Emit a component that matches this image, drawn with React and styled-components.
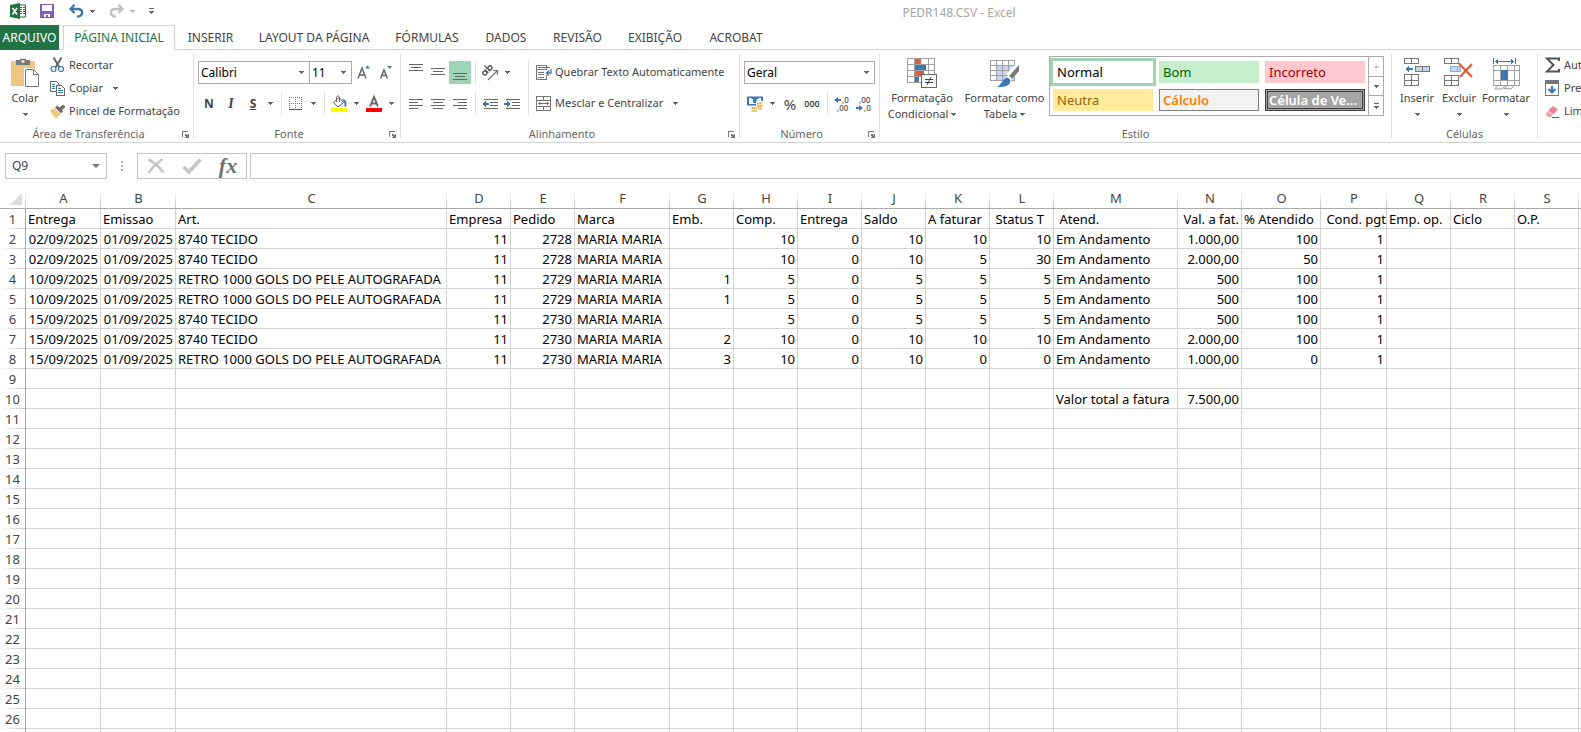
import React, { useState } from 'react';
import styled, { createGlobalStyle } from 'styled-components';

const COLUMNS = [
  ['A', 75], ['B', 75], ['C', 271], ['D', 64], ['E', 64], ['F', 95], ['G', 64], ['H', 64],
  ['I', 64], ['J', 64], ['K', 64], ['L', 64], ['M', 124], ['N', 64], ['O', 79], ['P', 66],
  ['Q', 64], ['R', 64], ['S', 64], ['T', 64], ['U', 64], ['V', 64], ['W', 64],
];

const ROW_COUNT = 50;

const TITLES = [
  'Entrega', 'Emissao', 'Art.', 'Empresa', 'Pedido', 'Marca', 'Emb.', 'Comp.', 'Entrega', 'Saldo',
  'A faturar', ' Status T', ' Atend.', ' Val. a fat.', '% Atendido', ' Cond. pgto', 'Emp. op.', 'Ciclo', 'O.P.',
];

const TECIDO = '8740 TECIDO';
const RETRO = 'RETRO 1000 GOLS DO PELE AUTOGRAFADA';

const order = (entrega, art, pedido, emb, comp, saldo, faturar, status, valor, atendido) => [
  entrega, '01/09/2025', art, '11', pedido, 'MARIA MARIA', emb, comp, '0', saldo,
  faturar, status, 'Em Andamento', valor, atendido, '1',
];

const ROWS = {
  1: TITLES,
  2: order('02/09/2025', TECIDO, '2728', '', '10', '10', '10', '10', '1.000,00', '100'),
  3: order('02/09/2025', TECIDO, '2728', '', '10', '10', '5', '30', '2.000,00', '50'),
  4: order('10/09/2025', RETRO, '2729', '1', '5', '5', '5', '5', '500', '100'),
  5: order('10/09/2025', RETRO, '2729', '1', '5', '5', '5', '5', '500', '100'),
  6: order('15/09/2025', TECIDO, '2730', '', '5', '5', '5', '5', '500', '100'),
  7: order('15/09/2025', TECIDO, '2730', '2', '10', '10', '10', '10', '2.000,00', '100'),
  8: order('15/09/2025', RETRO, '2730', '3', '10', '10', '0', '0', '1.000,00', '0'),
  10: [...Array(12).fill(''), 'Valor total a fatura', '7.500,00'],
};

const isNumeric = (value) => /^[\d./,]+$/.test(value);

const TABS = [
  ['PÁGINA INICIAL', 112],
  ['INSERIR', 71],
  ['LAYOUT DA PÁGINA', 136],
  ['FÓRMULAS', 90],
  ['DADOS', 68],
  ['REVISÃO', 75],
  ['EXIBIÇÃO', 80],
  ['ACROBAT', 82],
];

const STYLES = [
  { name: 'Normal', bg: '#ffffff', color: '#000000', pad: 4 },
  { name: 'Bom', bg: '#c6efce', color: '#006100', pad: 4 },
  { name: 'Incorreto', bg: '#ffc7ce', color: '#9c0006', pad: 4 },
  { name: 'Neutra', bg: '#ffeb9c', color: '#9c6500', pad: 4 },
  { name: 'Cálculo', bg: '#f2f2f2', color: '#fa7d00', line: '1px solid #7f7f7f', pad: 3, bold: true },
  { name: 'Célula de Ve...', bg: '#a5a5a5', color: '#ffffff', line: '3px double #3f3f3f', pad: 1, bold: true },
];

/* ---------- icons ---------- */

const Svg = ({ w, h, children, crisp = true }) => (
  <svg
    width={w}
    height={h}
    viewBox={`0 0 ${w} ${h}`}
    fill="none"
    aria-hidden="true"
    shapeRendering={crisp ? 'crispEdges' : 'auto'}
  >
    {children}
  </svg>
);

const Caret = ({ color = '#666' }) => (
  <Svg w={5} h={3}>
    <path d="M0 0h5v1H4v1H3v1H2V2H1V1H0z" fill={color} />
  </Svg>
);

const ExcelIcon = () => (
  <Svg w={16} h={16} crisp={false}>
    <path d="M9 2h6.500v12H9z" fill="#fff" stroke="#217346" />
    <path d="M10 4.500h2M13 4.500h2M10 6.500h2M13 6.500h2M10 8.500h2M13 8.500h2M10 10.500h2M13 10.500h2" stroke="#217346" />
    <path d="M0 2l10-2v16L0 14z" fill="#217346" />
    <path d="M2.500 5l4.500 6.500M7 5l-4.500 6.500" stroke="#fff" strokeWidth="1.600" />
  </Svg>
);

const SaveIcon = () => (
  <Svg w={14} h={14}>
    <path d="M0 0h14v14H0z" fill="#8a5bb5" />
    <path d="M2 1h10v6H2zM4 10h6v3H8v-2H6v2H4z" fill="#fff" />
  </Svg>
);

const UndoIcon = ({ color, flip }) => (
  <Svg w={15} h={14} crisp={false}>
    <g transform={flip ? 'translate(15 0) scale(-1 1)' : undefined}>
      <path d="M5.500 .8L1.500 5l4 4M2 5h6.500c3 0 4.600 1.600 4.600 3.800S11.200 12.500 8 12.600" stroke={color} strokeWidth="2.300" />
    </g>
  </Svg>
);

const CustomizeIcon = () => (
  <Svg w={5} h={6}>
    <path d="M0 0h5v1H0zM0 3h5v1H4v1H3v1H2V5H1V4H0z" fill="#666" />
  </Svg>
);

const PasteIcon = () => (
  <Svg w={30} h={30} crisp={false}>
    <path d="M1 3h24v25H1z" fill="#edc77f" />
    <path d="M6 2h4V.8h6V2h4v5H6z" fill="#7a7a7a" />
    <path d="M11.500 2.500h3v2h-3z" fill="#fff" />
    <path d="M14 10h9.500l6 6v13.500H14z" fill="#fff" />
    <path d="M15.500 11.500h8l5 5v12h-13zM23.500 11.500v5h5" stroke="#7a7a7a" />
  </Svg>
);

const CutIcon = () => (
  <Svg w={15} h={16} crisp={false}>
    <path d="M3.500 .5l6 10M11.500 .5l-6 10" stroke="#666" strokeWidth="2" />
    <circle cx="3.500" cy="12" r="2.500" stroke="#3e77b5" strokeWidth="1.200" />
    <circle cx="11" cy="12" r="2.500" stroke="#3e77b5" strokeWidth="1.200" />
  </Svg>
);

const CopyIcon = () => (
  <Svg w={15} h={15}>
    <path d="M.5 .5h6l2 2v8h-8z" fill="#fff" stroke="#666" />
    <path d="M2 3.500h3M2 5.500h3M2 7.500h3" stroke="#3e77b5" />
    <path d="M6.500 4.500h5l3 3v7h-8z" fill="#fff" stroke="#666" />
    <path d="M8 7.500h3M8 9.500h5M8 11.500h5" stroke="#3e77b5" />
  </Svg>
);

const BrushIcon = () => (
  <Svg w={16} h={15} crisp={false}>
    <path d="M0 6l5-2 6 6-5 4.500C3.500 13 1.500 9.500 0 6z" fill="#edc77f" />
    <path d="M5 3.500L7 1.500l2.500 2L13 .5 15.500 3l-3.500 3 1 1.500-2 2z" fill="#6d6d6d" />
    <path d="M5 4l6 6" stroke="#fff" strokeWidth=".8" />
  </Svg>
);

const LauncherIcon = () => (
  <Svg w={7} h={7}>
    <path d="M0 6V0h6v1H1v5zM3 3l1 0 1 1h1V3h1v4H3V6h1V5H3z" fill="#777" />
  </Svg>
);

const GrowIcon = ({ small }) => (
  <Svg w={14} h={16} crisp={false}>
    <path
      d={small ? 'M1.500 13.500L5 5l3.500 8.500M2.800 10.500h4.500' : 'M1 13.500L5 3l4 10.500M2.500 10h5'}
      stroke="#666"
      strokeWidth="1.500"
    />
    <path d={small ? 'M8 1h5l-2.500 3z' : 'M8 3.500h5L10.500 .5z'} fill="#3e77b5" />
  </Svg>
);

const BordersIcon = () => (
  <Svg w={14} h={14}>
    <path d="M.5 0v13M6.500 0v13M12.500 0v13M0 .5h13M0 6.500h13" stroke="#777" strokeDasharray="1 1" />
    <path d="M0 12.500h13" stroke="#555" />
  </Svg>
);

const FillIcon = () => (
  <Svg w={16} h={17} crisp={false}>
    <path d="M2.500 7.500L8 2.500l4.500 5-5.500 4.500z" fill="#fff" stroke="#666" />
    <path d="M5.500 7V2.500C5.500 .5 8.500 .5 8.500 2.500V7" stroke="#666" />
    <path d="M11 4c3.500 0 5.500 3 4 7.500L13.500 12V8z" fill="#3e77b5" />
    <path d="M0 13h16v4H0z" fill="#ffff00" />
  </Svg>
);

const FontColorIcon = () => (
  <Svg w={16} h={17} crisp={false}>
    <path d="M4 11.500L8 2l4 9.500M5.500 8.500h5" stroke="#666" strokeWidth="1.900" />
    <path d="M0 13h16v4H0z" fill="#ff0000" />
  </Svg>
);

const VAlignIcon = ({ top }) => (
  <Svg w={14} h={23}>
    <path d={`M0 ${top + 0.5}h14M2 ${top + 3.5}h10M0 ${top + 6.5}h14`} stroke="#666" />
  </Svg>
);

const HALIGN = {
  left: 'M0 .5h14M0 3.500h9M0 6.500h14M0 9.500h9',
  center: 'M0 .5h14M2 3.500h10M0 6.500h14M2 9.500h10',
  right: 'M0 .5h14M5 3.500h9M0 6.500h14M5 9.500h9',
};

const HAlignIcon = ({ align }) => (
  <Svg w={14} h={10}>
    <path d={HALIGN[align]} stroke="#666" />
  </Svg>
);

const OrientationIcon = () => (
  <Svg w={17} h={16} crisp={false}>
    <g transform="rotate(-45 6 7)" stroke="#555" strokeWidth="1.300">
      <circle cx="3" cy="5.500" r="2" />
      <path d="M5.500 3v5M8 0v8" />
      <circle cx="10.300" cy="5.500" r="2" />
    </g>
    <path d="M6 15L15 6M11 5.500h4.500V10" stroke="#777" strokeWidth="1.200" />
  </Svg>
);

const IndentIcon = ({ out }) => (
  <Svg w={16} h={12}>
    <path d="M2 1.500h14M8 4.500h8M8 7.500h8M2 10.500h14" stroke="#666" />
    <path d={out ? 'M0 6l4-3v2h3v2H4v2z' : 'M7 6L3 3v2H0v2h3v2z'} fill="#3e77b5" />
  </Svg>
);

const WrapIcon = () => (
  <Svg w={16} h={15}>
    <path d="M.5 .5h10v4H.5zM.5 4.500h10v10H.5z" stroke="#777" />
    <path d="M2 2.500h12" stroke="#3e77b5" />
    <path d="M2 7.500h6M2 9.500h6M2 12.500h6" stroke="#777" />
    <path d="M9 5h7v5H9z" fill="#fff" />
    <path d="M15 4v4h-5M13 5.500L10.500 8l2.500 2.500" stroke="#3e77b5" strokeWidth="1.300" shapeRendering="auto" />
  </Svg>
);

const MergeIcon = () => (
  <Svg w={15} h={15}>
    <path d="M.5 .5h14v14H.5zM0 4.500h15M0 10.500h15M7.500 0v4M7.500 11v4" stroke="#777" />
    <path d="M2 7.500h11" stroke="#3e77b5" />
    <path d="M2 7.500l2-2v4zM13 7.500l-2-2v4z" fill="#3e77b5" />
  </Svg>
);

const MoneyIcon = () => (
  <Svg w={16} h={16} crisp={false}>
    <path d="M0 .5h16v9H0z" fill="#3e77b5" />
    <path d="M2 2h2l1 1h6l1-1h2v6H2z" fill="#fff" />
    <circle cx="8" cy="5" r="2.300" fill="#3e77b5" />
    <path d="M9 5h7v10H3.500v-5H9z" fill="#fff" />
    <path d="M10 7.500h5.500M10 10h5.500M4.500 12h5.500M4.500 14.800h5.500M11 12.500h4" stroke="#e8b968" strokeWidth="1.800" />
  </Svg>
);

const DecimalIcon = ({ increase }) => (
  <Svg w={16} h={16} crisp={false}>
    <g fill="#555" fontFamily="Open Sans, sans-serif" fontSize="8" fontWeight="600">
      <text x={increase ? 8 : 3} y="7">{increase ? ',0' : ',00'}</text>
      <text x={increase ? 3 : 8} y="15">{increase ? ',00' : ',0'}</text>
    </g>
    <path
      d={increase ? 'M0 4l4-3v2h3v2H4v2z' : 'M7 12L3 9v2H0v2h3v2z'}
      fill="#3e77b5"
    />
  </Svg>
);

const ConditionalIcon = () => (
  <Svg w={30} h={30}>
    <path d="M.5 .5h27v24H.5zM0 6.500h28M0 12.500h28M0 18.500h28M7.500 0v25M21.500 0v25" stroke="#a0a0a0" />
    <path d="M8 1h6v5H8zM8 13h9v5H8z" fill="#d9603b" />
    <path d="M8 7h11v5H8zM8 19h4v5H8z" fill="#3e77b5" />
    <path d="M14.500 16.500h15v13h-15z" fill="#fff" stroke="#666" />
    <path d="M18 21.500h8M18 24.500h8M24 19l-4 8" stroke="#444" shapeRendering="auto" />
  </Svg>
);

const TableStyleIcon = () => (
  <Svg w={30} h={30} crisp={false}>
    <path d="M7 8h18v14H7z" fill="#c3d7ee" />
    <path d="M.5 2.500h24v20H.5zM0 7.500h25M0 12.500h25M0 17.500h25M6.500 2v20M12.500 2v20M18.500 2v20" stroke="#a0a0a0" shapeRendering="crispEdges" />
    <path d="M16 16L29 3v10l-7 8z" fill="#fff" />
    <path d="M29 7v6l-7 8-3-3z" fill="#7a7a7a" />
    <path d="M18 17l4 4-2 2-4-4z" fill="#fff" />
    <path d="M16 20c3-1 5 2 4 5-2 4-7 4-13 4 4-2 5-7 9-9z" fill="#3e77b5" />
  </Svg>
);

const InsertCellsIcon = () => (
  <Svg w={26} h={30}>
    <path d="M.5 .5h14v5H.5zM7.500 0v5M.5 16.500h14v11H.5zM7.500 16v12M0 22.500h15" stroke="#777" />
    <path d="M11.500 8.500h14v5h-14zM18.500 8v5" fill="#c3d7ee" stroke="#777" />
    <path d="M1 11l4-3v2h4v2H5v2z" fill="#3e77b5" />
  </Svg>
);

const DeleteCellsIcon = () => (
  <Svg w={30} h={30}>
    <path d="M.5 .5h14v5H.5zM7.500 0v5M.5 17.500h14v10H.5zM7.500 17v11M0 22.500h15" stroke="#777" />
    <path d="M6.500 8.500h10v5h-10zM13.500 8v5" fill="#c3d7ee" stroke="#8aa9cc" />
    <path d="M15 5.500l13 13.500M28 6L16 19" stroke="#d9603b" strokeWidth="2.200" shapeRendering="auto" />
  </Svg>
);

const FormatCellsIcon = () => (
  <Svg w={28} h={32}>
    <path d="M1.500 0v6M23.500 0v6M3 3.500h19" stroke="#3e77b5" />
    <path d="M3 3.500l3-3v6zM22 3.500l-3-3v6z" fill="#3e77b5" />
    <path d="M1.500 7.500h26v20h-26zM1 12.500h27M1 22.500h27M8.500 7v20M15.500 7v20M22.500 7v20" stroke="#a0a0a0" />
    <path d="M9 12h7v10H9z" fill="#3e77b5" />
    <path d="M3 30.500l3-3h7l-3 3.500H3zM12 30.500l3-3h7l-3 3.500z" fill="#fff" stroke="#999" shapeRendering="auto" />
  </Svg>
);

const SumIcon = () => (
  <Svg w={15} h={16} crisp={false}>
    <path d="M14 4V1.500H2L8.500 8 2 14.500h12V12" stroke="#555" strokeWidth="2" />
  </Svg>
);

const FillDownIcon = () => (
  <Svg w={15} h={16}>
    <path d="M.5 .5h13v15H.5z" fill="#fff" stroke="#777" />
    <path d="M0 0h14v4H0z" fill="#777" />
    <path d="M7 6v6M3.500 9L7 12.500 10.500 9" stroke="#3e77b5" strokeWidth="2" shapeRendering="auto" />
  </Svg>
);

const EraserIcon = () => (
  <Svg w={15} h={13} crisp={false}>
    <path d="M8 1l5 3.500-5 5L3 5.500z" fill="#e8829b" />
    <path d="M2.500 6l5 4-1.500 2H3L.5 9.500z" fill="#f0a5b6" />
    <path d="M7 12.500h7" stroke="#666" />
  </Svg>
);

const CancelIcon = () => (
  <Svg w={18} h={16} crisp={false}>
    <path d="M1.500 1.500C5 3 12 9 16.500 14.500M15.500 1C10 5 5 10 1.500 15" stroke="#c6c6c6" strokeWidth="2.600" />
  </Svg>
);

const ConfirmIcon = () => (
  <Svg w={20} h={16} crisp={false}>
    <path d="M1.500 9l5.500 5L18.500 1.500" stroke="#c6c6c6" strokeWidth="3.600" />
  </Svg>
);

/* ---------- ribbon pieces ---------- */

const Group = ({ label, width, launcher, children }) => (
  <GroupBox aria-label={label} $width={width}>
    <GroupBody>{children}</GroupBody>
    <GroupFooter>
      <GroupLabel>{label}</GroupLabel>
      {launcher && (
        <Launcher aria-label={`Mais opções: ${label}`}>
          <LauncherIcon />
        </Launcher>
      )}
    </GroupFooter>
  </GroupBox>
);

const Big = ({ width, icon, lines }) => (
  <BigButton $width={width}>
    <BigIcon>{icon}</BigIcon>
    <span>{lines[0]}</span>
    <BigSecond>
      {lines[1]}
      <Caret />
    </BigSecond>
  </BigButton>
);

const More = ({ label }) => (
  <ArrowButton aria-label={label}>
    <Caret />
  </ArrowButton>
);

const Picker = ({ label, width, joined, options }) => (
  <Combo $width={width} $joined={joined}>
    <select aria-label={label}>
      {options.map((option) => (
        <option key={option}>{option}</option>
      ))}
    </select>
    <Caret />
  </Combo>
);

const Ribbon = () => (
  <RibbonBar>
    <Group label="Área de Transferência" width={194} launcher>
      <Big width={50} icon={<PasteIcon />} lines={['Colar']} />
      <Stack>
        <TextButton><IconSlot><CutIcon /></IconSlot>Recortar</TextButton>
        <TextButton><IconSlot><CopyIcon /></IconSlot>Copiar<Trail><Caret /></Trail></TextButton>
        <TextButton><IconSlot><BrushIcon /></IconSlot>Pincel de Formatação</TextButton>
      </Stack>
    </Group>

    <Group label="Fonte" width={207} launcher>
      <Tools>
        <ToolRow>
          <Picker label="Fonte" width={112} joined options={['Calibri', 'Arial', 'Verdana']} />
          <Picker label="Tamanho da fonte" width={43} options={['11', '12', '14']} />
          <Tool aria-label="Aumentar fonte"><GrowIcon /></Tool>
          <Tool aria-label="Diminuir fonte"><GrowIcon small /></Tool>
        </ToolRow>
        <ToolRow>
          <Tool aria-label="Negrito"><b>N</b></Tool>
          <Tool aria-label="Itálico"><Slanted>I</Slanted></Tool>
          <Tool aria-label="Sublinhado"><Underlined>S</Underlined></Tool>
          <More label="Opções de sublinhado" />
          <Divider />
          <Tool aria-label="Bordas"><BordersIcon /></Tool>
          <More label="Opções de bordas" />
          <Divider />
          <Tool aria-label="Cor de preenchimento"><FillIcon /></Tool>
          <More label="Opções de preenchimento" />
          <Tool aria-label="Cor da fonte"><FontColorIcon /></Tool>
          <More label="Opções de cor da fonte" />
        </ToolRow>
      </Tools>
    </Group>

    <Group label="Alinhamento" width={339} launcher>
      <Tools>
        <ToolRow>
          <Tool aria-label="Alinhar em cima"><VAlignIcon top={3} /></Tool>
          <Tool aria-label="Alinhar no meio"><VAlignIcon top={7} /></Tool>
          <Tool aria-label="Alinhar embaixo" aria-pressed="true" $on><VAlignIcon top={12} /></Tool>
          <Divider />
          <Tool aria-label="Orientação"><OrientationIcon /></Tool>
          <More label="Opções de orientação" />
        </ToolRow>
        <ToolRow>
          <Tool aria-label="Alinhar à esquerda"><HAlignIcon align="left" /></Tool>
          <Tool aria-label="Centralizar"><HAlignIcon align="center" /></Tool>
          <Tool aria-label="Alinhar à direita"><HAlignIcon align="right" /></Tool>
          <Divider />
          <Tool aria-label="Diminuir recuo"><IndentIcon out /></Tool>
          <Tool aria-label="Aumentar recuo"><IndentIcon /></Tool>
        </ToolRow>
      </Tools>
      <TallDivider />
      <Tools>
        <TextButton><IconSlot><WrapIcon /></IconSlot>Quebrar Texto Automaticamente</TextButton>
        <TextButton><IconSlot><MergeIcon /></IconSlot>Mesclar e Centralizar<Trail><Caret /></Trail></TextButton>
      </Tools>
    </Group>

    <Group label="Número" width={140} launcher>
      <Tools>
        <ToolRow>
          <Picker label="Formato de número" width={131} options={['Geral', 'Número', 'Moeda']} />
        </ToolRow>
        <ToolRow>
          <Tool aria-label="Formato contábil"><MoneyIcon /></Tool>
          <More label="Opções de moeda" />
          <Tool aria-label="Porcentagem"><Percent>%</Percent></Tool>
          <Tool aria-label="Separador de milhares"><Thousands>000</Thousands></Tool>
          <Divider />
          <Tool aria-label="Aumentar casas decimais"><DecimalIcon increase /></Tool>
          <Tool aria-label="Diminuir casas decimais"><DecimalIcon /></Tool>
        </ToolRow>
      </Tools>
    </Group>

    <Group label="Estilo" width={512}>
      <Big width={84} icon={<ConditionalIcon />} lines={['Formatação', 'Condicional']} />
      <Big width={81} icon={<TableStyleIcon />} lines={['Formatar como', 'Tabela']} />
      <Gallery>
        <StyleGrid>
          {STYLES.map((style, index) => (
            <StyleCell key={style.name} $on={index === 0}>
              <StyleSwatch
                $bg={style.bg}
                $color={style.color}
                $line={style.line}
                $pad={style.pad}
                $bold={style.bold}
              >
                {style.name}
              </StyleSwatch>
            </StyleCell>
          ))}
        </StyleGrid>
        <GalleryScroll>
          <button aria-label="Rolar para cima"><Svg w={5} h={3}><path d="M2 0h1v1h1v1h1v1H0V2h1V1h1z" fill="#c0c0c0" /></Svg></button>
          <button aria-label="Rolar para baixo"><Caret /></button>
          <button aria-label="Mais estilos"><CustomizeIcon /></button>
        </GalleryScroll>
      </Gallery>
    </Group>

    <Group label="Células" width={146}>
      <Spacer $width={4} />
      <Big width={42} icon={<InsertCellsIcon />} lines={['Inserir']} />
      <Big width={42} icon={<DeleteCellsIcon />} lines={['Excluir']} />
      <Big width={52} icon={<FormatCellsIcon />} lines={['Formatar']} />
    </Group>

    <Group label="Edição" width={190}>
      <Spacer $width={7} />
      <Stack>
        <TextButton><IconSlot><SumIcon /></IconSlot>AutoSoma</TextButton>
        <TextButton><IconSlot><FillDownIcon /></IconSlot>Preencher</TextButton>
        <TextButton><IconSlot><EraserIcon /></IconSlot>Limpar</TextButton>
      </Stack>
    </Group>
  </RibbonBar>
);

const Sheet = () => (
  <SheetArea>
    <Grid>
      <colgroup>
        <Col $width={26} />
        {COLUMNS.map(([name, width]) => (
          <Col key={name} $width={width} />
        ))}
      </colgroup>
      <thead>
        <tr>
          <Corner>
            <Svg w={12} h={12} crisp={false}><path d="M12 0v12H0z" fill="#dcdcdc" /></Svg>
          </Corner>
          {COLUMNS.map(([name]) => (
            <ColumnHead key={name} scope="col">{name}</ColumnHead>
          ))}
        </tr>
      </thead>
      <tbody>
        {Array.from({ length: ROW_COUNT }, (_, i) => i + 1).map((row) => (
          <tr key={row}>
            <RowHead scope="row">{row}</RowHead>
            {COLUMNS.map(([name], col) => {
              const value = (ROWS[row] && ROWS[row][col]) || '';
              return (
                <Cell key={name} $right={isNumeric(value)}>{value}</Cell>
              );
            })}
          </tr>
        ))}
      </tbody>
    </Grid>
  </SheetArea>
);

export default function App() {
  const [activeTab, setActiveTab] = useState('PÁGINA INICIAL');
  const [cell, setCell] = useState('Q9');

  return (
    <Window>
      <GlobalStyle />
      <TitleBar>
        <QuickAccess>
          <ExcelIcon />
          <QuickButton $gap={14} aria-label="Salvar"><SaveIcon /></QuickButton>
          <QuickButton $gap={15} aria-label="Desfazer"><UndoIcon color="#3e77b5" /></QuickButton>
          <QuickButton $gap={6} aria-label="Opções de desfazer"><Caret /></QuickButton>
          <QuickButton $gap={14} aria-label="Refazer"><UndoIcon color="#c0c0c0" flip /></QuickButton>
          <QuickButton $gap={6} aria-label="Opções de refazer"><Caret color="#b5b5b5" /></QuickButton>
          <QuickButton $gap={14} aria-label="Personalizar barra"><CustomizeIcon /></QuickButton>
        </QuickAccess>
        <Title>PEDR148.CSV - Excel</Title>
      </TitleBar>

      <TabBar>
        <FileTab>ARQUIVO</FileTab>
        {TABS.map(([name, width]) => (
          <Tab key={name} $width={width} $active={name === activeTab} onClick={() => setActiveTab(name)}>
            {name}
          </Tab>
        ))}
      </TabBar>

      <Ribbon />

      <FormulaBar>
        <NameBox>
          <input aria-label="Caixa de nome" value={cell} onChange={(e) => setCell(e.target.value)} />
          <button aria-label="Abrir lista de nomes">
            <Svg w={8} h={4} crisp={false}><path d="M0 0h8L4 4z" fill="#777" /></Svg>
          </button>
        </NameBox>
        <Dots>
          <Svg w={2} h={10}><path d="M0 0h2v2H0zM0 4h2v2H0zM0 8h2v2H0z" fill="#b0b0b0" /></Svg>
        </Dots>
        <FormulaButtons>
          <button aria-label="Cancelar"><CancelIcon /></button>
          <button aria-label="Inserir"><ConfirmIcon /></button>
          <button aria-label="Inserir função"><Fx>fx</Fx></button>
        </FormulaButtons>
        <FormulaInput aria-label="Barra de fórmulas" />
      </FormulaBar>

      <Sheet />
    </Window>
  );
}

/* ---------- styles ---------- */

const GlobalStyle = createGlobalStyle`
  * {
    box-sizing: border-box;
  }
  body {
    margin: 0;
    overflow: hidden;
    background: #ffffff;
    color: #444444;
    font-family: 'Noto Sans', 'Open Sans', sans-serif;
    font-size: 12px;
    line-height: 16px;
  }
  button, input, select {
    margin: 0;
    padding: 0;
    border: 0;
    border-radius: 0;
    outline: none;
    background: none;
    color: inherit;
    font: inherit;
  }
  svg {
    display: block;
    flex: none;
    overflow: visible;
  }
`;

const Window = styled.div`
  display: flex;
  flex-direction: column;
  height: 100vh;
  overflow: hidden;
`;

const TitleBar = styled.header`
  display: flex;
  flex: none;
  height: 25px;
`;

const QuickAccess = styled.div`
  display: flex;
  flex: none;
  align-items: center;
  width: 337px;
  height: 22px;
  padding-left: 10px;
`;

const QuickButton = styled.button`
  margin-left: ${(props) => props.$gap}px;
`;

const Title = styled.div`
  flex: 1;
  line-height: 26px;
  text-align: center;
  color: #a6a6a6;
`;

const TabBar = styled.nav`
  display: flex;
  flex: none;
  height: 25px;
  border-bottom: 1px solid #d4d4d4;
  white-space: nowrap;
`;

const FileTab = styled.button`
  width: 59px;
  height: 25px;
  margin-right: 4px;
  background: #217346;
  color: #ffffff;
`;

const Tab = styled.button`
  flex: none;
  width: ${(props) => props.$width}px;
  height: 25px;
  border: 1px solid ${(props) => (props.$active ? '#d4d4d4' : 'transparent')};
  border-bottom: 0;
  background: ${(props) => (props.$active ? '#ffffff' : 'transparent')};
  color: ${(props) => (props.$active ? '#217346' : '#444444')};
`;

const RibbonBar = styled.div`
  display: flex;
  flex: none;
  padding-top: 4px;
  border-bottom: 1px solid #d4d4d4;
  overflow: hidden;
  font-size: 11px;
  white-space: nowrap;
`;

const GroupBox = styled.section`
  flex: none;
  width: ${(props) => props.$width}px;
  padding-right: 1px;
  background: linear-gradient(#e1e1e1, #e1e1e1) right top / 1px 84px no-repeat;
`;

const GroupBody = styled.div`
  display: flex;
  height: 72px;
`;

const GroupFooter = styled.div`
  display: flex;
  align-items: center;
  height: 16px;
`;

const GroupLabel = styled.span`
  flex: 1;
  text-align: center;
  color: #666666;
`;

const Launcher = styled.button`
  width: 16px;
  padding-left: 5px;
`;

const Spacer = styled.div`
  flex: none;
  width: ${(props) => props.$width}px;
`;

const Stack = styled.div`
  display: flex;
  flex-direction: column;
`;

const Tools = styled.div`
  display: flex;
  flex: none;
  flex-direction: column;
  gap: 8px;
  padding: 7px 0 0 4px;
`;

const ToolRow = styled.div`
  display: flex;
  height: 23px;
`;

const Tool = styled.button`
  display: flex;
  flex: none;
  align-items: center;
  justify-content: center;
  width: 22px;
  height: 23px;
  background: ${(props) => (props.$on ? '#9fd5b7' : 'none')};
  font-size: 12px;
`;

const ArrowButton = styled.button`
  display: flex;
  align-items: center;
  justify-content: center;
  width: 13px;
`;

const Divider = styled.div`
  width: 8px;
  background: linear-gradient(#e1e1e1, #e1e1e1) center / 1px 100% no-repeat;
`;

const TallDivider = styled.div`
  width: 1px;
  height: 55px;
  margin: 6px 3px 0 5px;
  background: #e1e1e1;
`;

const TextButton = styled.button`
  display: flex;
  align-items: center;
  height: 23px;
  padding-bottom: 1px;
  text-align: left;
`;

const IconSlot = styled.span`
  display: flex;
  width: 19px;
`;

const Trail = styled.span`
  margin-left: 10px;
`;

const BigButton = styled.button`
  display: flex;
  flex: none;
  flex-direction: column;
  align-items: center;
  width: ${(props) => props.$width}px;
  padding-top: 4px;
`;

const BigIcon = styled.span`
  height: 32px;
`;

const BigSecond = styled.span`
  display: flex;
  align-items: center;
  gap: 3px;
  height: 16px;
`;

const Combo = styled.label`
  display: flex;
  align-items: center;
  width: ${(props) => props.$width}px;
  height: 23px;
  margin-right: ${(props) => (props.$joined ? -1 : 1)}px;
  padding: 0 5px 0 2px;
  border: 1px solid #ababab;
  color: #000000;
  font-size: 12px;

  select {
    flex: 1;
    min-width: 0;
    appearance: none;
  }
`;

const Slanted = styled.i`
  font-family: 'Liberation Serif', serif;
  font-size: 14px;
  font-weight: bold;
`;

const Underlined = styled.span`
  font-weight: bold;
  text-decoration: underline;
`;

const Percent = styled.span`
  font-size: 15px;
`;

const Thousands = styled.span`
  font-size: 9px;
  font-weight: 600;
`;

const Gallery = styled.div`
  display: flex;
  height: 60px;
  margin: 2px 0 0 4px;
  border: 1px solid #ababab;
`;

const StyleGrid = styled.div`
  display: grid;
  grid-template-columns: repeat(3, 106px);
  grid-auto-rows: 28px;
  padding-top: 1px;
`;

const StyleCell = styled.button`
  border: 3px solid ${(props) => (props.$on ? '#9fd5b7' : 'transparent')};
`;

const StyleSwatch = styled.span`
  display: flex;
  align-items: center;
  height: 22px;
  padding-left: ${(props) => props.$pad}px;
  border: ${(props) => props.$line || '0'};
  background: ${(props) => props.$bg};
  color: ${(props) => props.$color};
  font-size: 13px;
  font-weight: ${(props) => (props.$bold ? '600' : 'normal')};
`;

const GalleryScroll = styled.div`
  display: flex;
  flex-direction: column;
  width: 15px;
  border-left: 1px solid #ababab;

  button {
    display: flex;
    flex: 1;
    align-items: center;
    justify-content: center;
  }
  button + button {
    border-top: 1px solid #ababab;
  }
`;

const FormulaBar = styled.div`
  display: flex;
  flex: none;
  height: 46px;
  padding: 10px 0 10px 5px;
`;

const NameBox = styled.div`
  display: flex;
  width: 102px;
  border: 1px solid #c6c6c6;

  input {
    flex: 1;
    min-width: 0;
    padding-left: 6px;
  }
  button {
    width: 20px;
    padding: 0 6px;
  }
`;

const Dots = styled.div`
  display: flex;
  align-items: center;
  justify-content: center;
  width: 30px;
`;

const FormulaButtons = styled.div`
  display: flex;
  width: 110px;
  border: 1px solid #c6c6c6;

  button {
    display: flex;
    flex: 1;
    align-items: center;
    justify-content: center;
  }
`;

const Fx = styled.i`
  font-family: 'Liberation Serif', serif;
  font-size: 22px;
  font-weight: bold;
  color: #707070;
`;

const FormulaInput = styled.input`
  flex: 1;
  margin-left: 3px;
  padding: 0 4px;
  border: 1px solid #c6c6c6;
  border-right: 0;
`;

const SheetArea = styled.main`
  flex: 1;
  min-height: 0;
  overflow: hidden;
`;

const Grid = styled.table`
  width: 0;
  border-spacing: 0;
  table-layout: fixed;
  font-size: 13px;
  line-height: 18px;
`;

const Col = styled.col`
  width: ${(props) => props.$width}px;
`;

const Corner = styled.td`
  height: 20px;
  padding: 0 0 0 10px;
  border-bottom: 1px solid #ababab;
  background: linear-gradient(#ffffff, #c6c6c6) right / 1px 100% no-repeat;
`;

const ColumnHead = styled.th`
  height: 20px;
  padding: 0;
  border-bottom: 1px solid #ababab;
  background: linear-gradient(#ffffff, #c6c6c6) right / 1px 100% no-repeat;
  font-weight: normal;
  vertical-align: top;
`;

const RowHead = styled.th`
  height: 20px;
  padding: 1px 0 0;
  border-right: 1px solid #ababab;
  background: linear-gradient(to right, #ffffff, #c6c6c6) bottom / 100% 1px no-repeat;
  font-weight: normal;
  vertical-align: top;
`;

const Cell = styled.td`
  height: 20px;
  padding: 1px 2px 0;
  border-right: 1px solid #d4d4d4;
  border-bottom: 1px solid #d4d4d4;
  overflow: hidden;
  color: #000000;
  text-align: ${(props) => (props.$right ? 'right' : 'left')};
  vertical-align: top;
  white-space: pre;
`;
